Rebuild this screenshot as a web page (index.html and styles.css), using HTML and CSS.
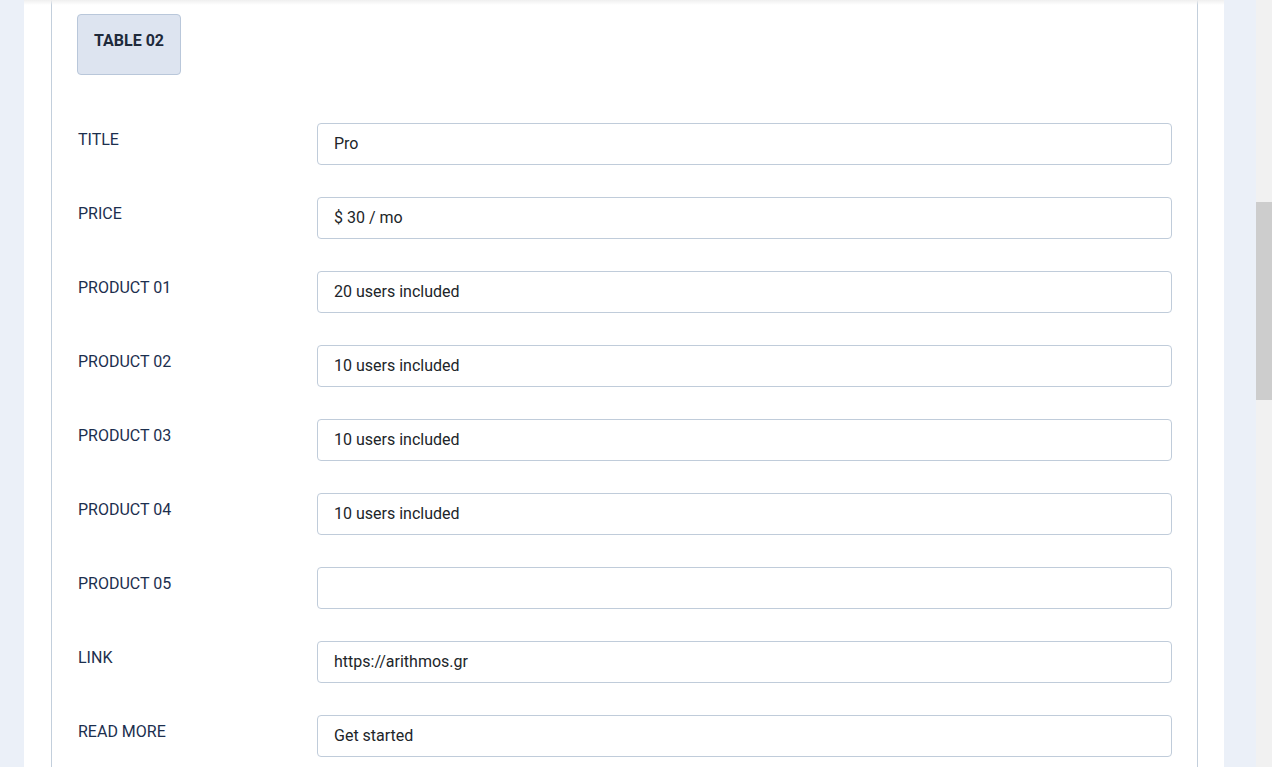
FILE: index.html
```html
<!DOCTYPE html>
<html>
<head>
<meta charset="utf-8">
<link rel="stylesheet" href="styles.css">
</head>
<body>
<div class="page">
  <main class="main">
    <div class="panel">
      <div class="topshade"></div>
      <section class="box">
        <button class="tab">TABLE 02</button>
        <form class="fields">
          <label class="lbl">TITLE</label><input class="inp" value="Pro">
          <label class="lbl">PRICE</label><input class="inp" value="$ 30 / mo">
          <label class="lbl">PRODUCT 01</label><input class="inp" value="20 users included">
          <label class="lbl">PRODUCT 02</label><input class="inp" value="10 users included">
          <label class="lbl">PRODUCT 03</label><input class="inp" value="10 users included">
          <label class="lbl">PRODUCT 04</label><input class="inp" value="10 users included">
          <label class="lbl">PRODUCT 05</label><input class="inp" value="">
          <label class="lbl">LINK</label><input class="inp" value="https://arithmos.gr">
          <label class="lbl">READ MORE</label><input class="inp" value="Get started">
        </form>
      </section>
    </div>
  </main>
  <div class="scrollbar"><div class="thumb"></div></div>
</div>
</body>
</html>
```
FILE: styles.css
```css
html, body {
  margin: 0;
  padding: 0;
  height: 100%;
  overflow: hidden;
}
body {
  font-family: Roboto, "Liberation Sans", sans-serif;
}
.page {
  display: flex;
  height: 767px;
}
.main {
  flex: 1;
  background: #ebf0f8;
  padding: 0 32px 0 24px;
  display: flex;
}
.panel {
  flex: 1;
  background: #fff;
  padding: 0 26px 0 27px;
  position: relative;
  display: flex;
}
.topshade {
  position: absolute;
  left: 0;
  right: 0;
  top: 0;
  height: 5px;
  background: linear-gradient(#efefef, rgba(255,255,255,0));
}
.box {
  flex: 1;
  border-left: 1px solid #c3cfdc;
  border-right: 1px solid #c3cfdc;
  padding: 14px 25px 0 25px;
}
.tab {
  display: block;
  height: 61px;
  width: 104px;
  background: #dde4f0;
  border: 1px solid #b9c7da;
  border-radius: 4px;
  font-family: Roboto, "Liberation Sans", sans-serif;
  font-weight: 700;
  font-size: 16px;
  color: #1e2a3b;
  padding: 0 0 8px 0;
}
.fields {
  margin-top: 48px;
  display: grid;
  grid-template-columns: 240px 1fr;
  row-gap: 32px;
}
.lbl {
  font-size: 16px;
  color: #1c2f4e;
  padding: 7px 0 0 1px;
  line-height: 20px;
}
.inp {
  height: 42px;
  box-sizing: border-box;
  border: 1px solid #c0ccda;
  border-radius: 4px;
  padding: 0 16px 2px;
  font-family: Roboto, "Liberation Sans", sans-serif;
  font-size: 16px;
  color: #212529;
  background: #fff;
  outline: none;
  width: 100%;
}
.scrollbar {
  width: 16px;
  background: #f1f1f1;
  position: relative;
}
.thumb {
  position: absolute;
  left: 0;
  right: 0;
  top: 202px;
  height: 198px;
  background: #cdcdcd;
}
```
